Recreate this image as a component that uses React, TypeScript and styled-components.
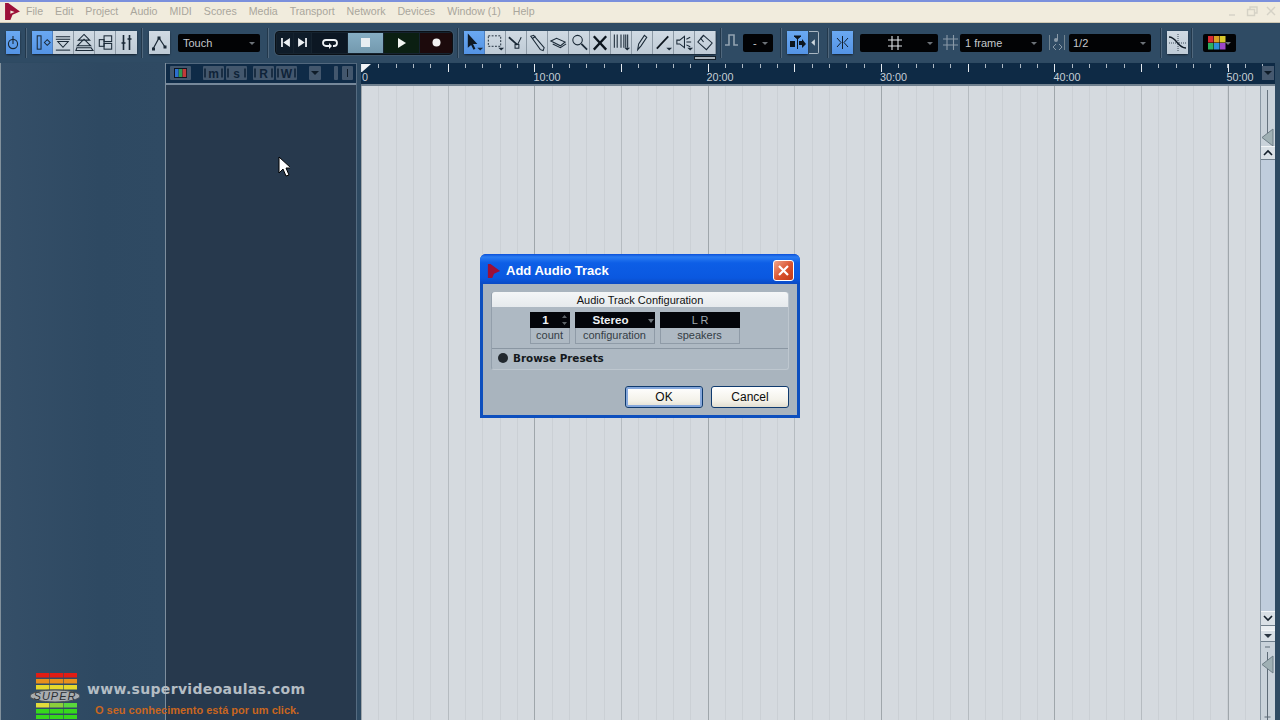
import React, { FC, ReactNode } from 'react';
import styled, { createGlobalStyle } from 'styled-components';

const GlobalStyle = createGlobalStyle`
  html, body {
    margin: 0;
    padding: 0;
    background: #2e4a62;
    overflow: hidden;
  }

  * {
    box-sizing: border-box;
  }
`;

const Page = styled.div`
  position: relative;
  display: flex;
  flex-direction: column;
  width: 1280px;
  height: 720px;
  overflow: hidden;
  font-family: 'Liberation Sans', Arial, sans-serif;
  background: #2e4a62;
`;

const TopEdge = styled.div`
  height: 2px;
  background: #7b90dc;
`;

const MenuBar = styled.div`
  display: flex;
  align-items: center;
  height: 21px;
  padding: 0 0 2px 5px;
  background: #f1ecdd;
  border-bottom: 1px solid #cfc8b4;
`;

const MenuLogo = styled.svg`
  width: 15px;
  height: 17px;
  margin-right: 6px;
`;

const MenuItems = styled.div`
  display: flex;
  flex: 1;
  gap: 12px;
`;

const MenuItem = styled.span`
  font-size: 10.6px;
  color: #a9a69c;
`;

const WindowControls = styled.div`
  display: flex;
  gap: 7px;
  padding-right: 3px;
`;

const WindowGlyph = styled.svg`
  width: 12px;
  height: 12px;
  stroke: #d5d2c6;
  fill: none;
  stroke-width: 1.4;
`;

const Toolbar = styled.div`
  position: relative;
  display: flex;
  align-items: center;
  height: 39px;
  padding-left: 6px;
  background: #2f4b64;
`;

const Sep = styled.div<{ $l: number; $r?: number }>`
  width: 2px;
  height: 30px;
  margin-left: ${({ $l }) => $l}px;
  margin-right: ${({ $r }) => $r ?? 0}px;
  background: linear-gradient(90deg, #22384c 50%, #50677c 50%);
`;

const ToolGroup = styled.div<{ $ml?: number }>`
  position: relative;
  display: flex;
  height: 23px;
  margin-left: ${({ $ml }) => $ml ?? 0}px;
  border-radius: 2px;
  box-shadow: 0 1px 2px #14212e;
`;

const ToolButton = styled.div<{ $active?: boolean; $w?: number }>`
  width: ${({ $w }) => $w ?? 21}px;
  height: 23px;
  background: ${({ $active }) =>
    $active ? 'linear-gradient(#6aa9f2, #5493e4)' : 'linear-gradient(#d0dae3, #bfcbd6)'};
  border-right: 1px solid ${({ $active }) => ($active ? '#4d80c2' : '#8c99a5')};

  &:last-child {
    border-right: 0;
  }

  svg {
    display: block;
    width: 100%;
    height: 100%;
  }
`;

const ModeIndicator = styled.div`
  position: absolute;
  right: 0;
  bottom: -6px;
  width: 22px;
  height: 4px;
  background: #a8b2ba;
  border: 1px solid #141f29;
`;

const SideToggle = styled.div`
  width: 10px;
  height: 23px;
  margin-left: 1px;
  border: 1px solid #a9b7c3;
  border-left: 0;
  border-radius: 0 2px 2px 0;

  svg {
    display: block;
    width: 100%;
    height: 100%;
  }
`;

const Select = styled.div<{ $w: number; $ml: number; $align?: string; $pad?: number }>`
  position: relative;
  display: flex;
  align-items: center;
  justify-content: ${({ $align }) => $align ?? 'flex-start'};
  width: ${({ $w }) => $w}px;
  height: 18px;
  margin-left: ${({ $ml }) => $ml}px;
  padding: 0 ${({ $align }) => ($align ? 14 : 0)}px 0 ${({ $pad }) => $pad ?? 5}px;
  background: #020305;
  border-radius: 2px;
  font-size: 11px;
  color: #c4c8cc;
`;

const Caret = styled.i`
  position: absolute;
  top: 8px;
  right: 5px;
  width: 0;
  height: 0;
  border-left: 3.5px solid transparent;
  border-right: 3.5px solid transparent;
  border-top: 3px solid #6c7278;
`;

const BarGlyph = styled.svg<{ $w: number; $ml: number }>`
  width: ${({ $w }) => $w}px;
  height: 23px;
  margin-left: ${({ $ml }) => $ml}px;
`;

const Transport = styled.div`
  display: flex;
  gap: 1px;
  width: 178px;
  height: 24px;
  padding: 1px 0 1px 1px;
  background: #16232f;
  border: 1px solid #0a1016;
  border-radius: 4px;
  box-shadow: 0 0 0 1px #3e566b;
`;

const TransportKey = styled.div<{ $w: number; $bg: string }>`
  display: flex;
  align-items: center;
  justify-content: center;
  width: ${({ $w }) => $w}px;
  background: ${({ $bg }) => $bg};

  svg {
    display: block;
  }
`;

const Main = styled.div`
  display: flex;
  flex: 1;
  min-height: 0;
  padding-right: 5px;
  padding-top: 1px;
  background: #2e4a62;
`;

const Inspector = styled.div`
  width: 165px;
  border-left: 1px solid #82919c;
  background: linear-gradient(90deg, #354f68, #2e4962 60%, #2f4a63);
`;

const TrackColumn = styled.div`
  display: flex;
  flex-direction: column;
  width: 192px;
  border-left: 1px solid #7d8e9d;
  border-right: 1px solid #556b80;
`;

const TrackHeader = styled.div`
  display: flex;
  align-items: center;
  height: 22px;
  padding: 0 0 1px 4px;
  background: #0f2b47;
  border-top: 1px solid #52687e;
  border-bottom: 2px solid #76889a;
`;

const HeaderTile = styled.div<{ $w: number; $ml: number }>`
  width: ${({ $w }) => $w}px;
  height: 14px;
  margin-left: ${({ $ml }) => $ml}px;
  background: #43576d;
  border-radius: 1px;

  svg {
    display: block;
    width: 100%;
    height: 100%;
  }
`;

const TrackList = styled.div`
  flex: 1;
  background: #27394d;
`;

const Arrange = styled.div`
  display: flex;
  flex-direction: column;
  flex: 1;
  min-width: 0;
  margin-left: 4px;
`;

const RulerRow = styled.div`
  position: relative;
  height: 23px;
  background-color: #0e2a45;
  background-image:
    repeating-linear-gradient(90deg, #e4e9ee 0 1px, transparent 1px 86.67px),
    repeating-linear-gradient(90deg, #aeb9c4 0 1px, transparent 1px 17.33px);
  background-size: 100% 8px, 100% 4px;
  background-position: 0 1px, 0 1px;
  background-repeat: no-repeat;
  border-bottom: 2px solid #71818f;
  overflow: hidden;
`;

const RulerLabel = styled.span`
  position: absolute;
  top: 8px;
  font-size: 10.8px;
  line-height: 13px;
  color: #c6ced6;
`;

const RulerMark = styled.svg`
  position: absolute;
  top: 1px;
  left: 0;
  width: 10px;
  height: 8px;
`;

const RulerMenu = styled.div`
  position: absolute;
  top: 3px;
  right: 1px;
  display: flex;
  align-items: center;
  justify-content: center;
  width: 12px;
  height: 14px;
  background: #46596f;
`;

const RulerMenuCaret = styled.i`
  width: 0;
  height: 0;
  border-left: 4px solid transparent;
  border-right: 4px solid transparent;
  border-top: 4px solid #0f1c29;
`;

const Workspace = styled.div`
  display: flex;
  flex: 1;
  min-height: 0;
`;

const Grid = styled.div`
  flex: 1;
  background-color: #d5dadf;
  background-image:
    repeating-linear-gradient(90deg, #9fa6ab 0 1px, transparent 1px 173.33px),
    repeating-linear-gradient(90deg, #b5bbc0 0 1px, transparent 1px 86.67px),
    repeating-linear-gradient(90deg, #cbd0d5 0 1px, transparent 1px 17.33px);
`;

const Scroller = styled.div`
  display: flex;
  flex-direction: column;
  width: 15px;
  background: #c6d1dc;
  border-left: 1px solid #8b98a4;
`;

const ZoomStrip = styled.div<{ $h: number }>`
  height: ${({ $h }) => $h}px;
  background: #c9d2da;

  svg {
    display: block;
    width: 100%;
    height: 100%;
  }
`;

const ScrollButton = styled.div<{ $h: number }>`
  height: ${({ $h }) => $h}px;
  background: #d9e0e6;
  border-top: 1px solid #f3f6f8;
  border-bottom: 1px solid #707f8c;

  svg {
    display: block;
    width: 100%;
    height: 100%;
  }
`;

const ScrollTrack = styled.div`
  flex: 1;
  background: #c0cddc;
`;

const ScrollGap = styled.div`
  height: 4px;
  background: #e8edf1;
`;

const Dialog = styled.div`
  position: absolute;
  left: 480px;
  top: 254px;
  display: flex;
  flex-direction: column;
  width: 320px;
  height: 164px;
  background: #0d4fbe;
  border-radius: 6px 6px 0 0;
  padding: 0 3px 3px;
`;

const DialogTitle = styled.div`
  display: flex;
  align-items: center;
  height: 30px;
  margin: 0 -3px;
  padding: 3px 6px 0 7px;
  border-radius: 6px 6px 0 0;
  background: linear-gradient(#0a4fd8 0, #2a7cf2 10%, #0d5ee6 30%, #0a58e0 80%, #0a4ac4 100%);
`;

const TitleText = styled.span`
  flex: 1;
  margin-left: 5px;
  font-size: 13px;
  font-weight: bold;
  color: #fff;
`;

const DialogClose = styled.div`
  width: 21px;
  height: 21px;
  margin-top: -1px;
  background: linear-gradient(135deg, #f0a58a, #d9512c 55%, #c23a18);
  border: 1px solid #fff;
  border-radius: 3px;

  svg {
    display: block;
    width: 100%;
    height: 100%;
  }
`;

const DialogBody = styled.div`
  display: flex;
  flex-direction: column;
  flex: 1;
  padding: 8px 8px 6px;
  background: #a9b4be;
`;

const ConfigPanel = styled.div`
  display: flex;
  flex-direction: column;
  height: 78px;
  background: #aeb9c3;
  border-radius: 3px;
  border-left: 1px solid #939fab;
  border-right: 1px solid #bec7cf;
  border-bottom: 1px solid #bec7cf;
`;

const ConfigHeader = styled.div`
  height: 15px;
  background: linear-gradient(#f4f6f7, #e6eaed);
  border-radius: 3px 3px 0 0;
  font-size: 11px;
  line-height: 16px;
  text-align: center;
  color: #111;
`;

const FieldRow = styled.div`
  display: flex;
  gap: 5px;
  height: 42px;
  padding: 5px 0 0 38px;
  border-bottom: 1px solid #8a96a2;
`;

const Field = styled.div<{ $w: number }>`
  display: flex;
  flex-direction: column;
  width: ${({ $w }) => $w}px;
  height: 32px;
  border: 1px solid #8f9ba7;
  border-top: 0;
`;

const FieldValue = styled.div<{ $bold?: boolean }>`
  position: relative;
  height: 16px;
  margin: 0 -1px;
  background: #03050a;
  font-size: ${({ $bold }) => ($bold ? 11.6 : 11)}px;
  font-weight: ${({ $bold }) => ($bold ? 'bold' : 'normal')};
  line-height: 16px;
  color: #eef1f4;
  text-align: center;
`;

const FieldValueLeft = styled(FieldValue)`
  padding-right: 9px;
`;

const FieldValueMuted = styled(FieldValue)`
  color: #a0a8ae;
`;

const Spinner = styled.svg`
  position: absolute;
  top: 2px;
  right: 2px;
  width: 7px;
  height: 12px;
`;

const FieldCaret = styled.i`
  position: absolute;
  top: 7px;
  right: 1px;
  width: 0;
  height: 0;
  border-left: 3.5px solid transparent;
  border-right: 3.5px solid transparent;
  border-top: 4px solid #6f767c;
`;

const FieldLabel = styled.div`
  padding-right: 1px;
  font-size: 11px;
  line-height: 15px;
  text-align: center;
  color: #343d45;
`;

const PresetRow = styled.div`
  display: flex;
  align-items: center;
  flex: 1;
  padding: 0 0 2px 6px;
`;

const PresetDot = styled.i`
  width: 10px;
  height: 10px;
  border-radius: 50%;
  background: #22282e;
`;

const PresetLabel = styled.span`
  margin-left: 5px;
  font-family: 'DejaVu Sans', Verdana, sans-serif;
  font-size: 10.4px;
  font-weight: bold;
  color: #14181c;
`;

const ButtonRow = styled.div`
  display: flex;
  justify-content: flex-end;
  gap: 8px;
  margin-top: 16px;
`;

const DialogButton = styled.div<{ $focus?: boolean }>`
  width: 78px;
  height: 22px;
  background: linear-gradient(#fff, #f3f1e8 70%, #e2ded0);
  border: 1px solid #0f3a6e;
  border-radius: 3px;
  box-shadow: ${({ $focus }) => ($focus ? 'inset 0 0 0 2px #86a8dc' : 'none')};
  font-size: 12px;
  line-height: 20px;
  text-align: center;
  color: #0c0c0c;
`;

const Watermark = styled.div`
  position: absolute;
  left: 30px;
  top: 672px;
  display: flex;
  pointer-events: none;
`;

const WatermarkLogo = styled.svg`
  width: 50px;
  height: 47px;
`;

const WatermarkCopy = styled.div`
  display: flex;
  flex-direction: column;
  margin-left: 7px;
  padding-top: 9px;
`;

const WatermarkSite = styled.span`
  font-family: 'DejaVu Sans', Verdana, sans-serif;
  font-size: 14px;
  font-weight: bold;
  letter-spacing: 0.33px;
  line-height: 17px;
  color: #b4bdc4;
`;

const WatermarkSlogan = styled.span`
  margin: 6px 0 0 8px;
  font-size: 11px;
  font-weight: bold;
  line-height: 13px;
  color: #c9661f;
`;

const Cursor = styled.svg`
  position: absolute;
  left: 278px;
  top: 156px;
  width: 12px;
  height: 23px;
`;

const INK = '#1a2937';

const inkLine = { fill: 'none', stroke: INK, strokeWidth: 1.1 };

const DownMark: FC = () => <polygon points='14,17 20,17 17,20' fill={INK} />;

const viewButtons: ReactNode[] = [
  <>
    <rect x='5.5' y='4.5' width='4' height='14' {...inkLine} />
    <path d='M13 11.5l3-3 3 3-3 3z' {...inkLine} />
  </>,
  <>
    <path d='M3 5.5h15M3 8h15' {...inkLine} />
    <path d='M5 10.5h11l-5.5 6z' {...inkLine} />
    <path d='M3 19.5h15' {...inkLine} />
  </>,
  <>
    <path d='M10.5 3l6 6h-12zM10.5 8l7 7h-14z' {...inkLine} />
    <path d='M3 17h15l2 3H2z' {...inkLine} />
  </>,
  <>
    <rect x='4.5' y='8.5' width='5' height='7' {...inkLine} />
    <rect x='9.5' y='4.5' width='8' height='6' {...inkLine} />
    <rect x='9.5' y='12.5' width='8' height='6' {...inkLine} />
  </>,
  <path d='M7.5 4v15M13.5 4v15M5.5 12h4M11.5 8h4' fill='none' stroke={INK} strokeWidth='1.6' />,
];

const toolButtons: ReactNode[] = [
  <>
    <path d='M4 2v15l3.5-3 2.5 5 2-1-2.5-5h4.5z' fill='#0f1a25' />
    <DownMark />
  </>,
  <>
    <rect x='3.5' y='4.5' width='13' height='11' fill='none' stroke={INK} strokeDasharray='2 1.5' />
    <DownMark />
  </>,
  <>
    <path d='M3 6l9 8' fill='none' stroke={INK} strokeWidth='1.8' />
    <path d='M16 6l-4 8' {...inkLine} />
    <rect x='9.5' y='13.5' width='4' height='4' {...inkLine} />
  </>,
  <path d='M4 5l3-1 11 13-1 3-3-1zM6 7l3-2' {...inkLine} />,
  <>
    <path d='M3 10l6-3 9 4-5 4z' {...inkLine} />
    <path d='M5 13l8 4 6-4' {...inkLine} />
  </>,
  <>
    <circle cx='9' cy='9' r='5' {...inkLine} />
    <path d='M13 13l6 6' fill='none' stroke={INK} strokeWidth='1.8' />
  </>,
  <path d='M4 5l13 14M17 5L4 19' fill='none' stroke='#0c151e' strokeWidth='2.4' />,
  <>
    <path d='M3.5 3v14M6.5 3v14M10.5 3v14M13.5 3v14M15.5 3v14M17.5 3v14' {...inkLine} />
    <DownMark />
  </>,
  <path d='M6 19l1-6 6-9 2.5 2-6 9z' {...inkLine} />,
  <>
    <path d='M4 18L16 5' fill='none' stroke='#0c151e' strokeWidth='1.8' />
    <DownMark />
  </>,
  <>
    <path d='M3 9h3l5-4v12l-5-4H3z' {...inkLine} />
    <path d='M13 8l4-2M13 11h5M13 14l4 2' {...inkLine} />
    <DownMark />
  </>,
  <>
    <path d='M9 4l9 8-6 7-9-8z' {...inkLine} />
    <path d='M9 4l-3 3 3 4' {...inkLine} />
  </>,
];

const menuItems = [
  'File',
  'Edit',
  'Project',
  'Audio',
  'MIDI',
  'Scores',
  'Media',
  'Transport',
  'Network',
  'Devices',
  'Window (1)',
  'Help',
];

function HeaderLetter({ letter }: { letter: string }) {
  return (
    <>
      <path d='M2 2.5v9M19 2.5v9' stroke='#0f2338' strokeWidth='1.6' />
      <text
        x='10.5'
        y='11.5'
        fontSize='12'
        fontWeight='bold'
        textAnchor='middle'
        fill='#0f2338'
        fontFamily='Liberation Sans, sans-serif'
      >
        {letter}
      </text>
    </>
  );
}

const headerTiles: { w: number; ml: number; glyph: ReactNode }[] = [
  {
    w: 21,
    ml: 0,
    glyph: (
      <>
        <rect x='4' y='2' width='13' height='10' fill='#0d1622' />
        <rect x='5' y='3' width='3.6' height='8' fill='#2d6fd0' />
        <rect x='8.8' y='3' width='3.6' height='8' fill='#2f9a4f' />
        <rect x='12.6' y='3' width='3.6' height='8' fill='#c23a3a' />
      </>
    ),
  },
  { w: 21, ml: 12, glyph: <HeaderLetter letter='m' /> },
  { w: 21, ml: 2, glyph: <HeaderLetter letter='s' /> },
  { w: 21, ml: 6, glyph: <HeaderLetter letter='R' /> },
  { w: 21, ml: 2, glyph: <HeaderLetter letter='W' /> },
  { w: 12, ml: 12, glyph: <polygon points='2,5 10,5 6,9' fill='#0f1c29' /> },
  { w: 4, ml: 13, glyph: null },
  { w: 11, ml: 4, glyph: <path d='M5.5 3v8' stroke='#0f1c29' strokeWidth='1' /> },
];

const rulerLabels = [
  { text: '0', at: 1 },
  { text: '10:00', at: 172.5 },
  { text: '20:00', at: 345.5 },
  { text: '30:00', at: 519 },
  { text: '40:00', at: 692.5 },
  { text: '50:00', at: 865.5 },
];

const logoRows = [
  { y: 1, c: ['#e21c14', '#e21c14', '#e21c14'] },
  { y: 7, c: ['#e8901c', '#e8901c', '#e8901c'] },
  { y: 13, c: ['#e6d82c', '#e6d82c', '#e6d82c'] },
  { y: 31, c: ['#e2dc3c', '#8ccf3c', '#5ad83c'] },
  { y: 37, c: ['#36d81c', '#36d81c', '#36d81c'] },
  { y: 43, c: ['#36d81c', '#36d81c', '#36d81c'] },
];

const LOGO_PATH = 'M0 0h3l11 8-7 3-2 5H0z';

const App: FC = () => {
  return (
    <Page>
      <GlobalStyle />
      <TopEdge />

      <MenuBar>
        <MenuLogo viewBox='0 0 14 16'>
          <path d={LOGO_PATH} fill='#9c1038' />
          <path d='M5 7l4 1.5-4 1.5z' fill='#f1ecdd' />
        </MenuLogo>
        <MenuItems>
          {menuItems.map((item) => (
            <MenuItem key={item}>{item}</MenuItem>
          ))}
        </MenuItems>
        <WindowControls>
          <WindowGlyph viewBox='0 0 12 12'>
            <path d='M2 10h6' />
          </WindowGlyph>
          <WindowGlyph viewBox='0 0 12 12'>
            <path d='M1.5 4.5h7v6h-7zM4 4V2h7v6H9' />
          </WindowGlyph>
          <WindowGlyph viewBox='0 0 12 12'>
            <path d='M2 2l8 8M10 2l-8 8' />
          </WindowGlyph>
        </WindowControls>
      </MenuBar>

      <Toolbar>
        <ToolGroup>
          <ToolButton $active $w={14}>
            <svg viewBox='0 0 14 23'>
              <circle cx='7' cy='13' r='4.6' {...inkLine} />
              <path d='M7 5v8' {...inkLine} />
            </svg>
          </ToolButton>
        </ToolGroup>
        <Sep $l={5} $r={5} />

        <ToolGroup>
          {viewButtons.map((glyph, i) => (
            <ToolButton key={i} $active={i === 0}>
              <svg viewBox='0 0 21 23'>{glyph}</svg>
            </ToolButton>
          ))}
        </ToolGroup>
        <Sep $l={4} $r={6} />

        <ToolGroup>
          <ToolButton>
            <svg viewBox='0 0 21 23'>
              <path d='M4 18l6-11 6 9' fill='none' stroke={INK} strokeWidth='1.2' />
              <rect x='3' y='16.5' width='3' height='3' fill={INK} />
              <rect x='8.5' y='5.5' width='3' height='3' fill={INK} />
              <rect x='14.5' y='14.5' width='3' height='3' fill={INK} />
            </svg>
          </ToolButton>
        </ToolGroup>
        <Select $w={82} $ml={8}>
          Touch
          <Caret />
        </Select>
        <Sep $l={7} $r={6} />

        <Transport>
          <TransportKey $w={16} $bg='#0f1c29'>
            <svg width='11' height='11' viewBox='0 0 10 10'>
              <path d='M1 1h1.6v8H1zM9 1v8L3 5z' fill='#eef2f5' />
            </svg>
          </TransportKey>
          <TransportKey $w={17} $bg='#0f1c29'>
            <svg width='11' height='11' viewBox='0 0 10 10'>
              <path d='M1 1v8l6-4zM7.4 1H9v8H7.4z' fill='#eef2f5' />
            </svg>
          </TransportKey>
          <TransportKey $w={35} $bg='#0c1723'>
            <svg width='18' height='12' viewBox='0 0 18 12'>
              <path
                d='M9 9H5a3 3 0 0 1 0-6h8a3 3 0 0 1 0 6h-1'
                fill='none'
                stroke='#eef2f5'
                strokeWidth='1.8'
              />
              <path d='M8 6v6l3-3z' fill='#eef2f5' />
            </svg>
          </TransportKey>
          <TransportKey $w={35} $bg='linear-gradient(#86aec4, #7399ae)'>
            <svg width='9' height='9' viewBox='0 0 9 9'>
              <rect width='9' height='9' fill='#e8eef2' />
            </svg>
          </TransportKey>
          <TransportKey $w={35} $bg='#0b1f12'>
            <svg width='9' height='10' viewBox='0 0 9 10'>
              <path d='M1 0l8 5-8 5z' fill='#f2f5f2' />
            </svg>
          </TransportKey>
          <TransportKey $w={32} $bg='#1c0a0c'>
            <svg width='9' height='9' viewBox='0 0 9 9'>
              <circle cx='4.5' cy='4.5' r='4' fill='#f2f2f2' />
            </svg>
          </TransportKey>
        </Transport>
        <Sep $l={4} $r={5} />

        <ToolGroup>
          {toolButtons.map((glyph, i) => (
            <ToolButton key={i} $active={i === 0}>
              <svg viewBox='0 0 21 23'>{glyph}</svg>
            </ToolButton>
          ))}
          <ModeIndicator />
        </ToolGroup>
        <Sep $l={4} />

        <BarGlyph $w={14} $ml={3} viewBox='0 0 14 23'>
          <path d='M0 14h4V4h5v10h4' fill='none' stroke='#93a3b0' strokeWidth='1.6' />
        </BarGlyph>
        <Select $w={30} $ml={4} $pad={10}>
          -
          <Caret />
        </Select>
        <Sep $l={7} $r={5} />

        <ToolGroup>
          <ToolButton $active>
            <svg viewBox='0 0 21 23'>
              <path d='M10.5 6v12M7 5h7l-3.5 3z' stroke='#0c151e' strokeWidth='1' fill='#0c151e' />
              <rect x='3' y='10' width='5' height='6' fill='#0c151e' />
              <path d='M12 10h3V8l4 5-4 4v-3h-3z' fill='#0c151e' />
            </svg>
          </ToolButton>
        </ToolGroup>
        <SideToggle>
          <svg viewBox='0 0 10 23'>
            <path d='M6.5 8v7L2.5 11.5z' fill='#cfd8df' />
          </svg>
        </SideToggle>
        <Sep $l={8} $r={3} />

        <ToolGroup>
          <ToolButton $active>
            <svg viewBox='0 0 21 23'>
              <path d='M5 7l4 4.5L5 16M16 7l-4 4.5 4 4.5M10.5 5v13' fill='none' stroke='#12202e' strokeWidth='1' />
            </svg>
          </ToolButton>
        </ToolGroup>

        <Select $w={78} $ml={7} $align='center'>
          <svg width='16' height='16' viewBox='0 0 16 16'>
            <path d='M5 1v14M11 1v14M1 5h14M1 11h14' stroke='#dfe4e8' strokeWidth='1.1' />
          </svg>
          <Caret />
        </Select>
        <BarGlyph $w={15} $ml={5} viewBox='0 0 15 23'>
          <path d='M4 4v15M10.5 4v15M0 8h15M0 14h15' stroke='#8a9aa8' strokeWidth='1.1' />
        </BarGlyph>
        <Select $w={82} $ml={2}>
          1 frame
          <Caret />
        </Select>
        <BarGlyph $w={16} $ml={7} viewBox='0 0 16 23'>
          <path d='M.5 4v15M15.5 4v15' stroke='#71838f' />
          <circle cx='7' cy='9' r='2' fill='#8a9aa8' />
          <path d='M8.5 9V3' stroke='#8a9aa8' />
          <path d='M7 13l-3 3 3 3M10 13l3 3-3 3' fill='none' stroke='#8a9aa8' />
        </BarGlyph>
        <Select $w={82} $ml={4} $pad={4}>
          1/2
          <Caret />
        </Select>
        <Sep $l={9} $r={5} />

        <ToolGroup>
          <ToolButton>
            <svg viewBox='0 0 21 23'>
              <path d='M2 6c8 0 8 11 17 11' fill='none' stroke='#0f1a25' strokeWidth='1.3' />
              <path d='M11 3v17M2 12h17' stroke={INK} strokeWidth='.8' strokeDasharray='1 1' />
            </svg>
          </ToolButton>
        </ToolGroup>
        <Sep $l={3} />

        <Select $w={33} $ml={10} $pad={5}>
          <svg width='18' height='14' viewBox='0 0 18 14'>
            <rect width='5.5' height='6.5' fill='#d82c34' />
            <rect x='6' width='5.5' height='6.5' fill='#d8a024' />
            <rect x='12' width='5.5' height='6.5' fill='#d8c82c' />
            <rect y='7' width='5.5' height='6.5' fill='#2cb060' />
            <rect x='6' y='7' width='5.5' height='6.5' fill='#2c8fd8' />
            <rect x='12' y='7' width='5.5' height='6.5' fill='#9c48c8' />
          </svg>
          <Caret />
        </Select>
      </Toolbar>

      <Main>
        <Inspector />

        <TrackColumn>
          <TrackHeader>
            {headerTiles.map((tile, i) => (
              <HeaderTile key={i} $w={tile.w} $ml={tile.ml}>
                {tile.glyph && <svg viewBox={`0 0 ${tile.w} 14`}>{tile.glyph}</svg>}
              </HeaderTile>
            ))}
          </TrackHeader>
          <TrackList />
        </TrackColumn>

        <Arrange>
          <RulerRow>
            {rulerLabels.map((label) => (
              <RulerLabel key={label.text} style={{ left: label.at }}>
                {label.text}
              </RulerLabel>
            ))}
            <RulerMark viewBox='0 0 10 8'>
              <path d='M1 0h9L1 8z' fill='#f2f4f6' />
            </RulerMark>
            <RulerMenu>
              <RulerMenuCaret />
            </RulerMenu>
          </RulerRow>

          <Workspace>
            <Grid />
            <Scroller>
              <ZoomStrip $h={60}>
                <svg viewBox='0 0 14 60'>
                  <path d='M6.5 4v50' stroke='#66737f' />
                  <path d='M12 43v17L1 51.5z' fill='#9fb0b4' stroke='#6f7f88' />
                </svg>
              </ZoomStrip>
              <ScrollButton $h={14}>
                <svg viewBox='0 0 14 12'>
                  <path d='M3 8l4-4 4 4' fill='none' stroke='#14202c' strokeWidth='1.6' />
                </svg>
              </ScrollButton>
              <ScrollTrack />
              <ScrollButton $h={15}>
                <svg viewBox='0 0 14 13'>
                  <path d='M3 4l4 4 4-4' fill='none' stroke='#14202c' strokeWidth='1.6' />
                </svg>
              </ScrollButton>
              <ScrollGap />
              <ScrollButton $h={12}>
                <svg viewBox='0 0 14 10'>
                  <polygon points='3,3 11,3 7,7' fill='#2b3743' />
                </svg>
              </ScrollButton>
              <ZoomStrip $h={78}>
                <svg viewBox='0 0 14 78'>
                  <path d='M4 5h5M6.5 10v62M3.5 75h6M6.5 72v6' stroke='#5c6a76' />
                  <path d='M12 14v17L1 22.5z' fill='#9fb0b4' stroke='#6f7f88' />
                </svg>
              </ZoomStrip>
            </Scroller>
          </Workspace>
        </Arrange>
      </Main>

      <Watermark>
        <WatermarkLogo viewBox='0 0 50 47'>
          {logoRows.map((row) => (
            <g key={row.y}>
              <rect x='6' y={row.y} width='13.4' height='4.5' fill={row.c[0]} />
              <rect x='20' y={row.y} width='13.4' height='4.5' fill={row.c[1]} />
              <rect x='34' y={row.y} width='13' height='4.5' fill={row.c[2]} />
            </g>
          ))}
          <ellipse cx='25' cy='24' rx='25' ry='6' fill='#a9adb0' stroke='#4a4f54' />
          <text
            x='25'
            y='28'
            fontSize='11'
            fontStyle='italic'
            textAnchor='middle'
            fill='#2b2f33'
            fontFamily='Liberation Sans, sans-serif'
            letterSpacing='1'
          >
            SUPER
          </text>
        </WatermarkLogo>
        <WatermarkCopy>
          <WatermarkSite>www.supervideoaulas.com</WatermarkSite>
          <WatermarkSlogan>O seu conhecimento está por um click.</WatermarkSlogan>
        </WatermarkCopy>
      </Watermark>

      <Dialog>
        <DialogTitle>
          <svg width='14' height='14' viewBox='0 0 14 16'>
            <path d={LOGO_PATH} fill='#9c1038' />
          </svg>
          <TitleText>Add Audio Track</TitleText>
          <DialogClose>
            <svg viewBox='0 0 19 19'>
              <path d='M5 5l9 9M14 5l-9 9' stroke='#fff' strokeWidth='2.2' />
            </svg>
          </DialogClose>
        </DialogTitle>
        <DialogBody>
          <ConfigPanel>
            <ConfigHeader>Audio Track Configuration</ConfigHeader>
            <FieldRow>
              <Field $w={40}>
                <FieldValueLeft $bold>
                  1
                  <Spinner viewBox='0 0 7 12'>
                    <path d='M3.5 1L6 4H1zM3.5 11L1 8h5z' fill='#5e6469' />
                  </Spinner>
                </FieldValueLeft>
                <FieldLabel>count</FieldLabel>
              </Field>
              <Field $w={80}>
                <FieldValueLeft $bold>
                  Stereo
                  <FieldCaret />
                </FieldValueLeft>
                <FieldLabel>configuration</FieldLabel>
              </Field>
              <Field $w={80}>
                <FieldValueMuted>L R</FieldValueMuted>
                <FieldLabel>speakers</FieldLabel>
              </Field>
            </FieldRow>
            <PresetRow>
              <PresetDot />
              <PresetLabel>Browse Presets</PresetLabel>
            </PresetRow>
          </ConfigPanel>
          <ButtonRow>
            <DialogButton $focus>OK</DialogButton>
            <DialogButton>Cancel</DialogButton>
          </ButtonRow>
        </DialogBody>
      </Dialog>

      <Cursor viewBox='0 0 12 23'>
        <path d='M1 1v16l4-4 3 7 3-1-3-7h5z' fill='#fff' stroke='#000' />
      </Cursor>
    </Page>
  );
};

export default App;
